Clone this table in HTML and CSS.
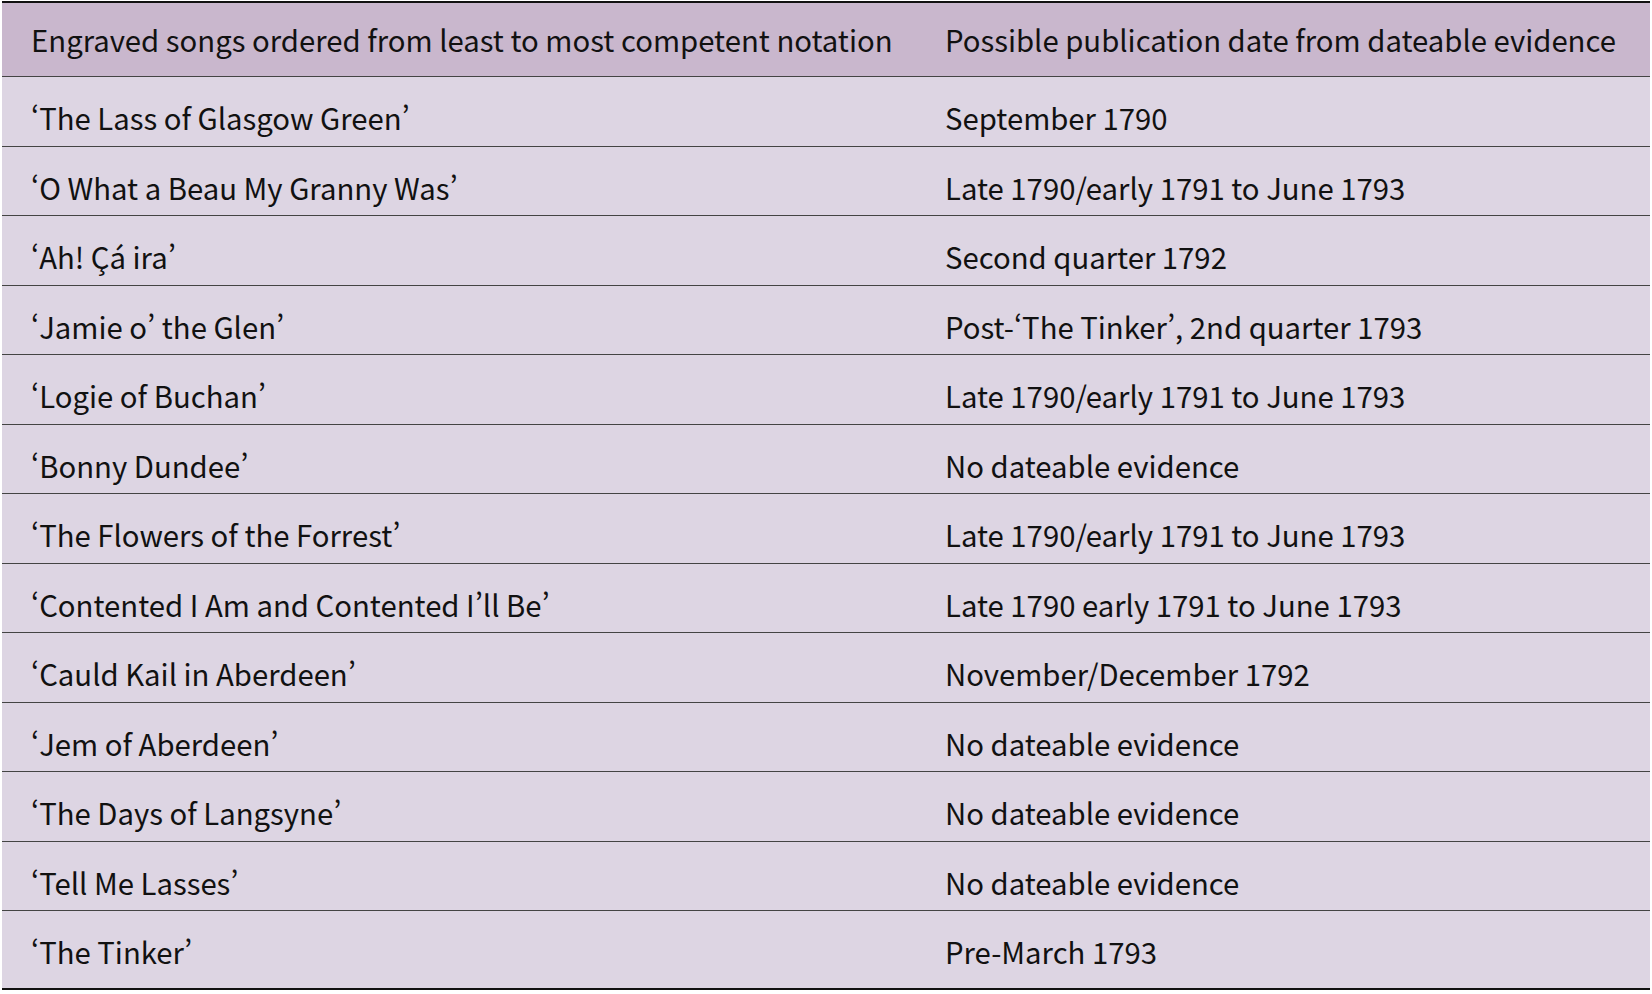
FILE: index.html
```html
<!DOCTYPE html>
<html lang="en">
<head>
<meta charset="utf-8">
<title>Engraved songs</title>
<link rel="stylesheet" href="styles.css">
</head>
<body>
<div class="page">
<table class="songs">
<thead>
<tr><th class="c1">Engraved songs ordered from least to most competent notation</th><th class="c2">Possible publication date from dateable evidence</th></tr>
</thead>
<tbody>
<tr><td class="c1">‘The Lass of Glasgow Green’</td><td class="c2">September 1790</td></tr>
<tr><td class="c1">‘O What a Beau My Granny Was’</td><td class="c2">Late 1790/early 1791 to June 1793</td></tr>
<tr><td class="c1">‘Ah! Çá ira’</td><td class="c2">Second quarter 1792</td></tr>
<tr><td class="c1">‘Jamie o’ the Glen’</td><td class="c2">Post-‘The Tinker’, 2nd quarter 1793</td></tr>
<tr><td class="c1">‘Logie of Buchan’</td><td class="c2">Late 1790/early 1791 to June 1793</td></tr>
<tr><td class="c1">‘Bonny Dundee’</td><td class="c2">No dateable evidence</td></tr>
<tr><td class="c1">‘The Flowers of the Forrest’</td><td class="c2">Late 1790/early 1791 to June 1793</td></tr>
<tr><td class="c1">‘Contented I Am and Contented I’ll Be’</td><td class="c2">Late 1790 early 1791 to June 1793</td></tr>
<tr><td class="c1">‘Cauld Kail in Aberdeen’</td><td class="c2">November/December 1792</td></tr>
<tr><td class="c1">‘Jem of Aberdeen’</td><td class="c2">No dateable evidence</td></tr>
<tr><td class="c1">‘The Days of Langsyne’</td><td class="c2">No dateable evidence</td></tr>
<tr><td class="c1">‘Tell Me Lasses’</td><td class="c2">No dateable evidence</td></tr>
<tr class="last"><td class="c1">‘The Tinker’</td><td class="c2">Pre-March 1793</td></tr>
</tbody>
</table>
</div>
</body>
</html>
```
FILE: styles.css
```css
html, body {
  margin: 0;
  padding: 0;
  background: #ffffff;
}
.page {
  padding: 1px 2px;
}
.songs {
  width: 1648px;
  border-collapse: separate;
  border-spacing: 0;
  table-layout: fixed;
  font-family: "Noto Sans CJK SC", "Noto Sans", sans-serif;
  font-feature-settings: "pwid" 1;
  font-size: 29.3px;
  line-height: 40px;
  color: #111111;
  border-top: 2px solid #111111;
  border-bottom: 2px solid #111111;
}
.songs th,
.songs td {
  box-sizing: border-box;
  text-align: left;
  vertical-align: top;
  font-weight: normal;
  white-space: nowrap;
  padding: 0;
}
.songs .c1 {
  width: 943px;
  padding-left: 29px;
}
.songs .c2 {
  padding-left: 0;
}
.songs thead th {
  background: #c9b7cd;
  height: 74px;
  padding-top: 16px;
  border-bottom: 1px solid #444444;
}
.songs tbody td {
  background: #ddd5e3;
  height: 69.5px;
  padding-top: 20px;
  border-bottom: 1px solid #444444;
}
.songs tbody tr.last td {
  height: 77px;
  border-bottom: none;
}
```
